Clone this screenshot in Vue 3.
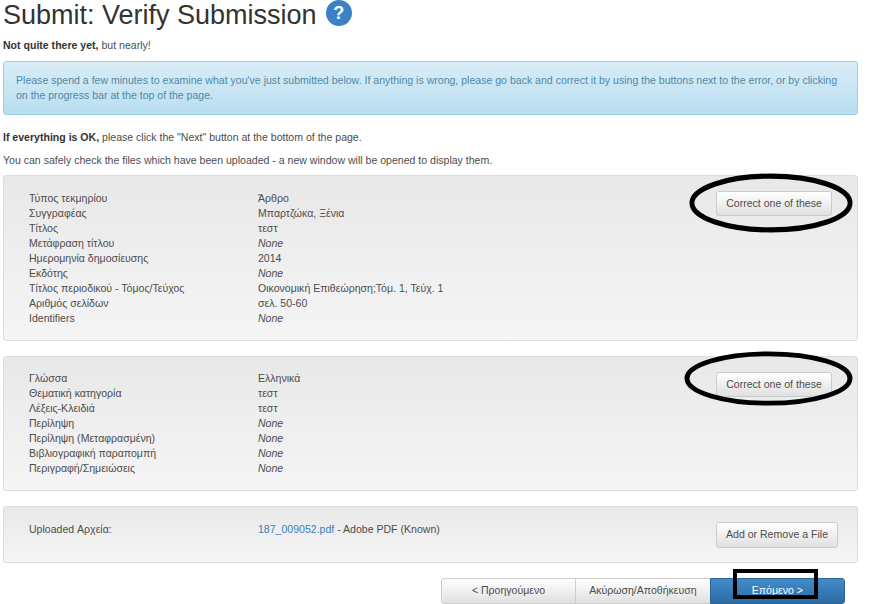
<template>
  <div class="page">
    <!-- Heading -->
    <h1 class="title">
      Submit: Verify Submission
      <span class="help">?</span>
    </h1>
    <p class="lead"><strong>Not quite there yet,</strong> but nearly!</p>

    <div class="alert">
      Please spend a few minutes to examine what you've just submitted below. If anything is wrong, please go back and correct it by using the buttons next to the error, or by clicking on the progress bar at the top of the page.
    </div>

    <p class="ok"><strong>If everything is OK,</strong> please click the "Next" button at the bottom of the page.</p>
    <p class="safe">You can safely check the files which have been uploaded - a new window will be opened to display them.</p>

    <!-- Metadata sections -->
    <div
      v-for="section in sections"
      :key="section.id"
      class="well"
      :class="section.id"
    >
      <div class="rows">
        <div v-for="row in section.rows" :key="row[0]" class="row">
          <span>{{ row[0] }}</span>
          <span :class="{ none: row[1] === 'None' }">{{ row[1] }}</span>
        </div>
      </div>
      <button class="btn correct">Correct one of these</button>
      <svg class="ring" viewBox="0 0 170 58" preserveAspectRatio="none">
        <ellipse cx="85" cy="29" rx="81" ry="26" />
      </svg>
    </div>

    <!-- Files -->
    <div class="well files">
      <div class="row file-row">
        <span>Uploaded Αρχεία:</span>
        <span><a href="#" class="file-link">187_009052.pdf</a> - Adobe PDF (Known)</span>
      </div>
      <button class="btn add">Add or Remove a File</button>
    </div>

    <!-- Navigation -->
    <div class="nav-wrap">
      <div class="nav">
        <button class="btn nav-btn">&lt; Προηγούμενο</button>
        <button class="btn nav-btn">Ακύρωση/Αποθήκευση</button>
        <button class="btn nav-btn primary">Επόμενο &gt;</button>
        <div class="box"></div>
      </div>
    </div>
  </div>
</template>

<script setup>
const sections = [
  {
    id: 'first',
    rows: [
      ['Τύπος τεκμηρίου', 'Άρθρο'],
      ['Συγγραφέας', 'Μπαρτζώκα, Ξένια'],
      ['Τίτλος', 'τεστ'],
      ['Μετάφραση τίτλου', 'None'],
      ['Ημερομηνία δημοσίευσης', '2014'],
      ['Εκδότης', 'None'],
      ['Τίτλος περιοδικού - Τόμος/Τεύχος', 'Οικονομική Επιθεώρηση;Τόμ. 1, Τεύχ. 1'],
      ['Αριθμός σελίδων', 'σελ. 50-60'],
      ['Identifiers', 'None'],
    ],
  },
  {
    id: 'second',
    rows: [
      ['Γλώσσα', 'Ελληνικά'],
      ['Θεματική κατηγορία', 'τεστ'],
      ['Λέξεις-Κλειδιά', 'τεστ'],
      ['Περίληψη', 'None'],
      ['Περίληψη (Μεταφρασμένη)', 'None'],
      ['Βιβλιογραφική παραπομπή', 'None'],
      ['Περιγραφή/Σημειώσεις', 'None'],
    ],
  },
]
</script>

<style>
html,
body {
  background: #fff;
  overflow: hidden;
}
</style>

<style scoped>
.page {
  width: 874px;
  height: 604px;
  padding: 0 16px 0 3px;
  box-sizing: border-box;
  overflow: hidden;
  font-family: "Liberation Sans", Arial, sans-serif;
  font-size: 10.56px;
  line-height: 15px;
  color: #4d4d4d;
}

.title {
  display: flex;
  align-items: center;
  gap: 9px;
  height: 30px;
  margin: 0;
  font-size: 27px;
  font-weight: 400;
  line-height: 30px;
  color: #333;
}

.help {
  display: flex;
  align-items: center;
  justify-content: center;
  width: 26px;
  height: 26px;
  margin-top: -4px;
  border-radius: 50%;
  background: #3b82c4;
  color: #fff;
  font-size: 18px;
  font-weight: 700;
}

.lead {
  margin: 8px 0 8px;
}

.lead strong,
.ok strong {
  color: #333;
}

.alert {
  padding: 11px 12px;
  box-sizing: content-box;
  width: 829px;
  height: 30px;
  border: 1px solid #9acfea;
  border-radius: 3px;
  background: linear-gradient(to bottom, #d9edf7, #b9def0);
  color: #5189a8;
}

.ok {
  margin: 15px 0 8px;
}

.safe {
  margin: 0 0 7px;
}

.well {
  position: relative;
  display: flex;
  justify-content: space-between;
  box-sizing: border-box;
  padding: 15px 25px 0 25px;
  margin-bottom: 15px;
  border: 1px solid #dcdcdc;
  border-radius: 3px;
  background: linear-gradient(to bottom, #e8e8e8, #f5f5f5);
}

.first {
  height: 166px;
}

.second {
  height: 135px;
  padding-top: 14px;
}

.second .correct {
  margin-top: 1px;
}

.files {
  height: 57px;
  padding-right: 19px;
}

.row {
  display: grid;
  grid-template-columns: 229px auto;
}

.none {
  font-style: italic;
}

.file-link {
  color: #3a7fb8;
  text-decoration: none;
}

.btn {
  font-family: inherit;
  font-size: 10.56px;
  line-height: 15px;
  color: #4d4d4d;
  border: 1px solid #ccc;
  border-radius: 3px;
  background: linear-gradient(to bottom, #fff, #e0e0e0);
  cursor: pointer;
}

.correct {
  width: 116px;
  height: 25px;
  padding: 0;
}

.add {
  width: 122px;
  height: 26px;
  padding: 0 0 2px;
}

.ring {
  position: absolute;
  top: -3px;
  right: 3px;
  width: 166px;
  height: 60px;
  fill: none;
  stroke: #000;
  stroke-width: 5;
  pointer-events: none;
}

.second .ring {
  top: -6px;
  right: 3px;
  width: 171px;
  height: 55px;
}

.nav-wrap {
  display: flex;
  justify-content: flex-end;
  padding-right: 13px;
}

.nav {
  position: relative;
  display: flex;
  height: 26px;
}

.nav-btn {
  width: 135.4px;
  height: 26px;
  padding: 0 0 2px;
  margin-left: -1px;
  border-radius: 0;
}

.nav-btn:first-child {
  margin-left: 0;
  border-radius: 3px 0 0 3px;
}

.primary {
  border-color: #2b669a;
  border-radius: 0 3px 3px 0;
  background: linear-gradient(to bottom, #428bca, #2d6ca2);
  color: #fff;
}

.box {
  position: absolute;
  top: -9px;
  left: 292px;
  width: 85px;
  height: 30px;
  box-sizing: border-box;
  border: 4px solid #000;
}
</style>
